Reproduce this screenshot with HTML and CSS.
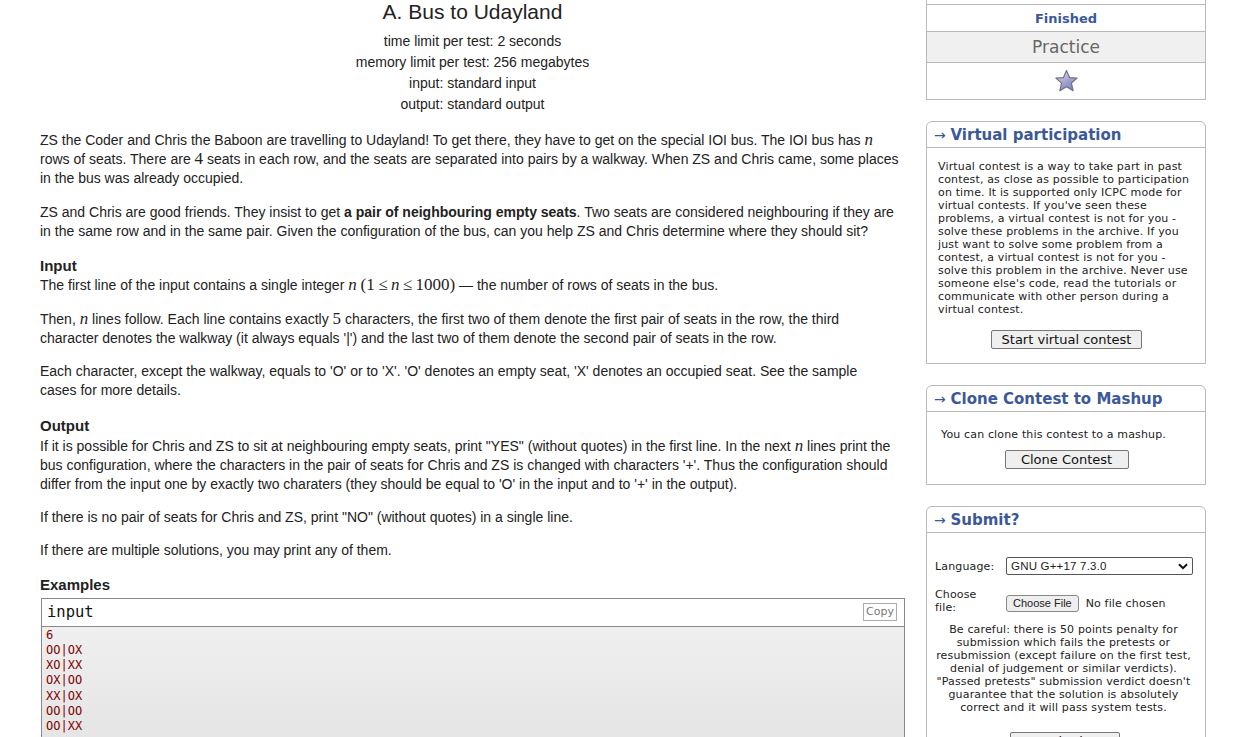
FILE: index.html
```html
<!DOCTYPE html>
<html>
<head>
<meta charset="utf-8">
<link rel="stylesheet" href="styles.css">
</head>
<body>
<div class="page">
  <div class="main">
    <div class="header">
      <div class="title">A. Bus to Udayland</div>
      <div class="limit">time limit per test: 2 seconds</div>
      <div class="limit">memory limit per test: 256 megabytes</div>
      <div class="limit">input: standard input</div>
      <div class="limit">output: standard output</div>
    </div>
    <div class="statement">
      <p>ZS the Coder and Chris the Baboon are travelling to Udayland! To get there, they have to get on the special IOI bus. The IOI bus has <span class="m">n</span> rows of seats. There are <span class="num">4</span> seats in each row, and the seats are separated into pairs by a walkway. When ZS and Chris came, some places in the bus was already occupied.</p>
      <p>ZS and Chris are good friends. They insist to get <b>a pair of neighbouring empty seats</b>. Two seats are considered neighbouring if they are in the same row and in the same pair. Given the configuration of the bus, can you help ZS and Chris determine where they should sit?</p>
    </div>
    <div class="section">
      <div class="sec-title">Input</div>
      <p>The first line of the input contains a single integer <span class="m">n</span> <span class="num">(1&#8201;≤&#8201;</span><span class="m">n</span><span class="num">&#8201;≤&#8201;1000)</span> — the number of rows of seats in the bus.</p>
      <p>Then, <span class="m">n</span> lines follow. Each line contains exactly <span class="num">5</span> characters, the first two of them denote the first pair of seats in the row, the third<br>character denotes the walkway (it always equals '|') and the last two of them denote the second pair of seats in the row.</p>
      <p>Each character, except the walkway, equals to 'O' or to 'X'. 'O' denotes an empty seat, 'X' denotes an occupied seat. See the sample<br>cases for more details.</p>
    </div>
    <div class="section output">
      <div class="sec-title">Output</div>
      <p>If it is possible for Chris and ZS to sit at neighbouring empty seats, print "YES" (without quotes) in the first line. In the next <span class="m">n</span> lines print the bus configuration, where the characters in the pair of seats for Chris and ZS is changed with characters '+'. Thus the configuration should differ from the input one by exactly two charaters (they should be equal to 'O' in the input and to '+' in the output).</p>
      <p>If there is no pair of seats for Chris and ZS, print "NO" (without quotes) in a single line.</p>
      <p>If there are multiple solutions, you may print any of them.</p>
    </div>
    <div class="section examples">
      <div class="sec-title">Examples</div>
      <div class="sample">
        <div class="sample-head"><span class="sample-label">input</span><span class="copy">Copy</span></div>
        <pre class="sample-body">6
OO|OX
XO|XX
OX|OO
XX|OX
OO|OO
OO|XX</pre>
      </div>
    </div>
  </div>

  <div class="sidebar">
    <div class="box status">
      <div class="cut"></div>
      <div class="row finished">Finished</div>
      <div class="row practice">Practice</div>
      <div class="row star-row">
        <svg width="25" height="24" viewBox="0 0 24 23">
          <defs>
            <linearGradient id="sg" x1="0" y1="0" x2="0.6" y2="1">
              <stop offset="0" stop-color="#e6e6f2"/>
              <stop offset="0.55" stop-color="#a9a9d2"/>
              <stop offset="1" stop-color="#8282b8"/>
            </linearGradient>
          </defs>
          <path d="M12 1.5 L14.9 8.2 L22.2 8.8 L16.7 13.6 L18.4 20.8 L12 17 L5.6 20.8 L7.3 13.6 L1.8 8.8 L9.1 8.2 Z" fill="url(#sg)" stroke="#6f6f84" stroke-width="1.1" stroke-linejoin="round"/>
        </svg>
      </div>
    </div>

    <div class="box rounded">
      <div class="caption"><span class="arrow">→</span> <b>Virtual participation</b></div>
      <div class="body virt">
        <div class="vtext">Virtual contest is a way to take part in past contest, as close as possible to participation on time. It is supported only ICPC mode for virtual contests. If you've seen these problems, a virtual contest is not for you - solve these problems in the archive. If you just want to solve some problem from a contest, a virtual contest is not for you - solve this problem in the archive. Never use someone else's code, read the tutorials or communicate with other person during a virtual contest.</div>
        <div class="btn-wrap"><button class="btn">Start virtual contest</button></div>
      </div>
    </div>

    <div class="box rounded">
      <div class="caption"><span class="arrow">→</span> <b>Clone Contest to Mashup</b></div>
      <div class="body clone">
        <div class="ctext">You can clone this contest to a mashup.</div>
        <div class="btn-wrap"><button class="btn wide">Clone Contest</button></div>
      </div>
    </div>

    <div class="box rounded submit">
      <div class="caption"><span class="arrow">→</span> <b>Submit?</b></div>
      <div class="body sub">
        <div class="form-row lang">
          <div class="label">Language:</div>
          <div class="select">
            <span>GNU G++17 7.3.0</span>
            <svg class="chev" width="10" height="7" viewBox="0 0 10 7"><path d="M1 1.2 L5 5.2 L9 1.2" fill="none" stroke="#111" stroke-width="2"/></svg>
          </div>
        </div>
        <div class="form-row file">
          <div class="label">Choose<br>file:</div>
          <div class="file-input"><span class="file-btn">Choose File</span><span class="file-none">No file chosen</span></div>
        </div>
        <div class="warn">Be careful: there is 50 points penalty for submission which fails the pretests or resubmission (except failure on the first test, denial of judgement or similar verdicts). "Passed pretests" submission verdict doesn't guarantee that the solution is absolutely correct and it will pass system tests.</div>
        <div class="btn-wrap"><button class="btn submit-btn">Submit</button></div>
      </div>
    </div>
  </div>
</div>
</body>
</html>
```

FILE: styles.css
```css
html, body {
  margin: 0;
  padding: 0;
  background: #fff;
  overflow: hidden;
}
.page {
  display: flex;
  align-items: flex-start;
  padding-left: 40px;
  gap: 21px;
  font-family: "Liberation Sans", Arial, sans-serif;
  color: #222;
}
.main {
  width: 865px;
  font-size: 14px;
}
.header {
  text-align: center;
}
.title {
  font-size: 21px;
  line-height: 24px;
  margin-bottom: 7px;
}
.limit {
  line-height: 21px;
  font-size: 14px;
}
.statement {
  margin-top: 16px;
}
p {
  margin: 0 0 14.5px 0;
  line-height: 19px;
}
.m {
  font-family: "Liberation Serif", "Times New Roman", serif;
  font-style: italic;
  font-size: 17px;
  line-height: 1;
}
.num {
  font-family: "Liberation Serif", "Times New Roman", serif;
  font-size: 17px;
  line-height: 1;
}
.section {
  margin-top: 1px;
}
.sec-title {
  font-weight: bold;
  font-size: 15px;
  line-height: 21px;
}
.output .sec-title {
  margin-bottom: 1px;
}
.output p {
  margin-bottom: 14px;
}
.examples .sec-title {
  margin-bottom: 3px;
}
.sample {
  border: 1px solid #888;
  margin-left: 1px;
}
.sample-head {
  display: flex;
  justify-content: space-between;
  align-items: center;
  height: 27px;
  border-bottom: 1px solid #888;
  padding: 0 7px 0 5px;
}
.sample-label {
  font-family: "DejaVu Sans Mono", monospace;
  font-size: 15.5px;
  color: #111;
}
.copy {
  font-family: "DejaVu Sans", sans-serif;
  font-size: 11px;
  color: #777;
  border: 1px solid #aaa;
  padding: 1px 2px;
  line-height: 14px;
}
.sample-body {
  margin: 0;
  padding: 1px 4px 0 4px;
  background: linear-gradient(#efefef, #e4e4e4);
  color: #800000;
  font-family: "DejaVu Sans Mono", monospace;
  font-size: 12px;
  line-height: 15.3px;
  height: 120px;
}

/* sidebar */
.sidebar {
  width: 280px;
  font-family: "DejaVu Sans", Verdana, sans-serif;
  display: flex;
  flex-direction: column;
  gap: 21px;
}
.box {
  border: 1px solid #b9b9b9;
  background: #fff;
}
.status {
  border-top: none;
}
.cut {
  height: 4px;
  border-bottom: 1px solid #b9b9b9;
}
.row {
  text-align: center;
  border-bottom: 1px solid #b9b9b9;
}
.row:last-child {
  border-bottom: none;
}
.finished {
  height: 26px;
  line-height: 27px;
  font-weight: bold;
  font-size: 13px;
  color: #3b5998;
}
.practice {
  height: 30px;
  line-height: 31px;
  font-size: 17px;
  color: #666;
  background: #f0f0f0;
}
.star-row {
  height: 36px;
  display: flex;
  align-items: center;
  justify-content: center;
}
.rounded {
  border-radius: 6px 6px 0 0;
}
.caption {
  height: 25px;
  line-height: 26px;
  border-bottom: 1px solid #b9b9b9;
  padding-left: 7px;
  color: #3b5998;
  font-size: 15px;
}
.caption .arrow {
  font-size: 14px;
}
.caption b {
  font-size: 15px;
}
.body {
  padding: 12px 10px 14px 11px;
  font-size: 11px;
  line-height: 13px;
  color: #222;
  letter-spacing: 0.15px;
}
.vtext {
  margin-bottom: 14px;
}
.btn-wrap {
  text-align: center;
}
.btn {
  font-family: "DejaVu Sans", Verdana, sans-serif;
  font-size: 13px;
  line-height: 15px;
  padding: 1px 7px;
  background: #efefef;
  border: 1px solid #777;
  border-radius: 2px;
  color: #111;
  width: 151px;
}
.btn.wide {
  width: 124px;
}
.clone {
  padding-top: 16px;
  padding-bottom: 15px;
}
.ctext {
  padding-left: 3px;
  margin-bottom: 9px;
}
.sub {
  padding: 24px 10px 0 8px;
}
.form-row {
  display: flex;
  align-items: center;
}
.label {
  width: 71px;
  flex: none;
}
.lang {
  height: 18px;
  margin-bottom: 13px;
}
.select {
  position: relative;
  height: 16px;
  border: 1px solid #555;
  border-radius: 2px;
  font-family: "Liberation Sans", Arial, sans-serif;
  font-size: 11.5px;
  line-height: 16px;
  padding-left: 4px;
  width: 181px;
  letter-spacing: 0.2px;
}
.chev {
  position: absolute;
  right: 4px;
  top: 5px;
}
.file {
  margin-bottom: 9px;
}
.file-input {
  display: flex;
  align-items: center;
  padding-top: 4px;
}
.file-btn {
  font-family: "Liberation Sans", Arial, sans-serif;
  font-size: 11px;
  line-height: 15px;
  padding: 0 6px;
  background: #efefef;
  border: 1px solid #888;
  border-radius: 3px;
  margin-right: 7px;
  letter-spacing: 0;
}
.file-none {
  font-size: 11px;
}
.warn {
  text-align: center;
  font-size: 11px;
  line-height: 13px;
  margin: 0 -2px 18px -5px;
}
.submit-btn {
  width: 110px;
}
```
